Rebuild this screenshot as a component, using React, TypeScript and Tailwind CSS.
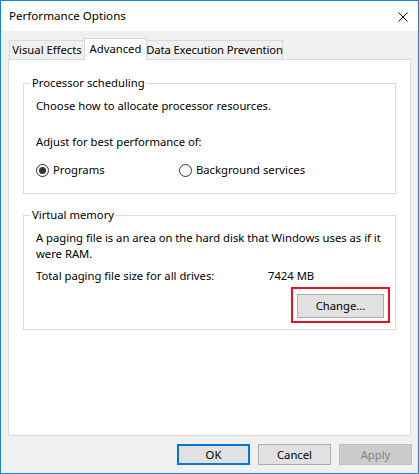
import React from 'react';

const font = "font-['Segoe_UI','Noto_Sans',sans-serif]";

// Windows-style radio button
const Radio: React.FC<{ checked?: boolean; label: string }> = ({ checked, label }) => (
  <label className="flex items-center gap-[4px] h-[16px]">
    <span className="w-[13px] h-[13px] rounded-full border border-[#333333] bg-white flex items-center justify-center">
      {checked && <span className="w-[7px] h-[7px] rounded-full bg-[#333333]" />}
    </span>
    <span>{label}</span>
  </label>
);

const GroupBox: React.FC<{ title: string; children: React.ReactNode; className?: string }> = ({
  title,
  children,
  className,
}) => (
  <fieldset className={`border border-[#dcdcdc] px-[12px] ${className ?? ''}`}>
    <legend className="-ml-[6px] px-[2px] leading-[16px]">{title}</legend>
    {children}
  </fieldset>
);

const DialogButton: React.FC<{ label: string; variant?: 'default' | 'normal' | 'disabled'; className?: string }> = ({
  label,
  variant = 'normal',
  className,
}) => {
  const styles =
    variant === 'default'
      ? 'border-2 border-[#0078d7] bg-[#e1e1e1] text-black'
      : variant === 'disabled'
        ? 'border border-[#bfbfbf] bg-[#cccccc] text-[#838383]'
        : 'border border-[#adadad] bg-[#e1e1e1] text-black';
  return (
    <button className={`flex items-center justify-center leading-[16px] ${styles} ${className ?? ''}`}>
      {label}
    </button>
  );
};

export default function App() {
  return (
    <div
      className={`w-[419px] h-[474px] border border-[#1883d7] bg-[#f0f0f0] flex flex-col text-[11.25px] leading-[16px] text-black ${font}`}
    >
      {/* Title bar */}
      <div className="h-[30px] bg-white flex items-center justify-between pl-[8px] pr-[10px] shrink-0">
        <span className="leading-[16px] text-[11.6px]">Performance Options</span>
        <svg width="10" height="10" viewBox="0 0 10 10" className="mt-[1px]">
          <path d="M0.5 0.5 L9.5 9.5 M9.5 0.5 L0.5 9.5" stroke="#111" strokeWidth="1" fill="none" />
        </svg>
      </div>

      {/* Tabs */}
      <div className="flex items-end h-[22px] mt-[6px] pl-[8px] shrink-0 whitespace-nowrap">
        <div className="w-[75px] h-[19px] border border-b-0 border-r-0 border-[#d9d9d9] flex items-center justify-center">
          Visual Effects
        </div>
        <div className="w-[63px] h-[22px] -mb-px relative z-10 bg-white border border-b-0 border-[#d9d9d9] flex items-start justify-center pt-[2px]">
          Advanced
        </div>
        <div className="w-[136px] h-[19px] border border-b-0 border-l-0 border-[#d9d9d9] flex items-center justify-center tracking-[-0.1px]">
          Data Execution Prevention
        </div>
      </div>

      {/* Tab panel */}
      <div className="mx-[7px] h-[377px] bg-white border border-[#d9d9d9] px-[14px] pt-[15px] shrink-0">
        <GroupBox title="Processor scheduling" className="pb-[15px]">
          <p className="mt-[7px]">Choose how to allocate processor resources.</p>
          <p className="mt-[20px]">Adjust for best performance of:</p>
          <div className="mt-[12px] flex">
            <div className="w-[143px]">
              <Radio checked label="Programs" />
            </div>
            <Radio label="Background services" />
          </div>
        </GroupBox>

        <GroupBox title="Virtual memory" className="mt-[13px] pb-[6px]">
          <p className="mt-[7px]">
            A paging file is an area on the hard disk that Windows uses as if it
            <br />
            were RAM.
          </p>
          <div className="mt-[6px] flex">
            <span className="w-[232px]">Total paging file size for all drives:</span>
            <span>7424 MB</span>
          </div>
          <div className="flex justify-end mt-[3px] -mr-[7px]">
            <div className="border-2 border-[#e81123] px-[4px] pt-[5px] pb-[3px]">
              <DialogButton label="Change..." className="w-[87px] h-[24px]" />
            </div>
          </div>
        </GroupBox>
      </div>

      {/* Bottom buttons */}
      <div className="flex justify-end gap-[8px] pr-[6px] mt-[8px]">
        <DialogButton label="OK" variant="default" className="w-[73px] h-[21px]" />
        <DialogButton label="Cancel" className="w-[73px] h-[21px]" />
        <DialogButton label="Apply" variant="disabled" className="w-[73px] h-[21px]" />
      </div>
    </div>
  );
}
